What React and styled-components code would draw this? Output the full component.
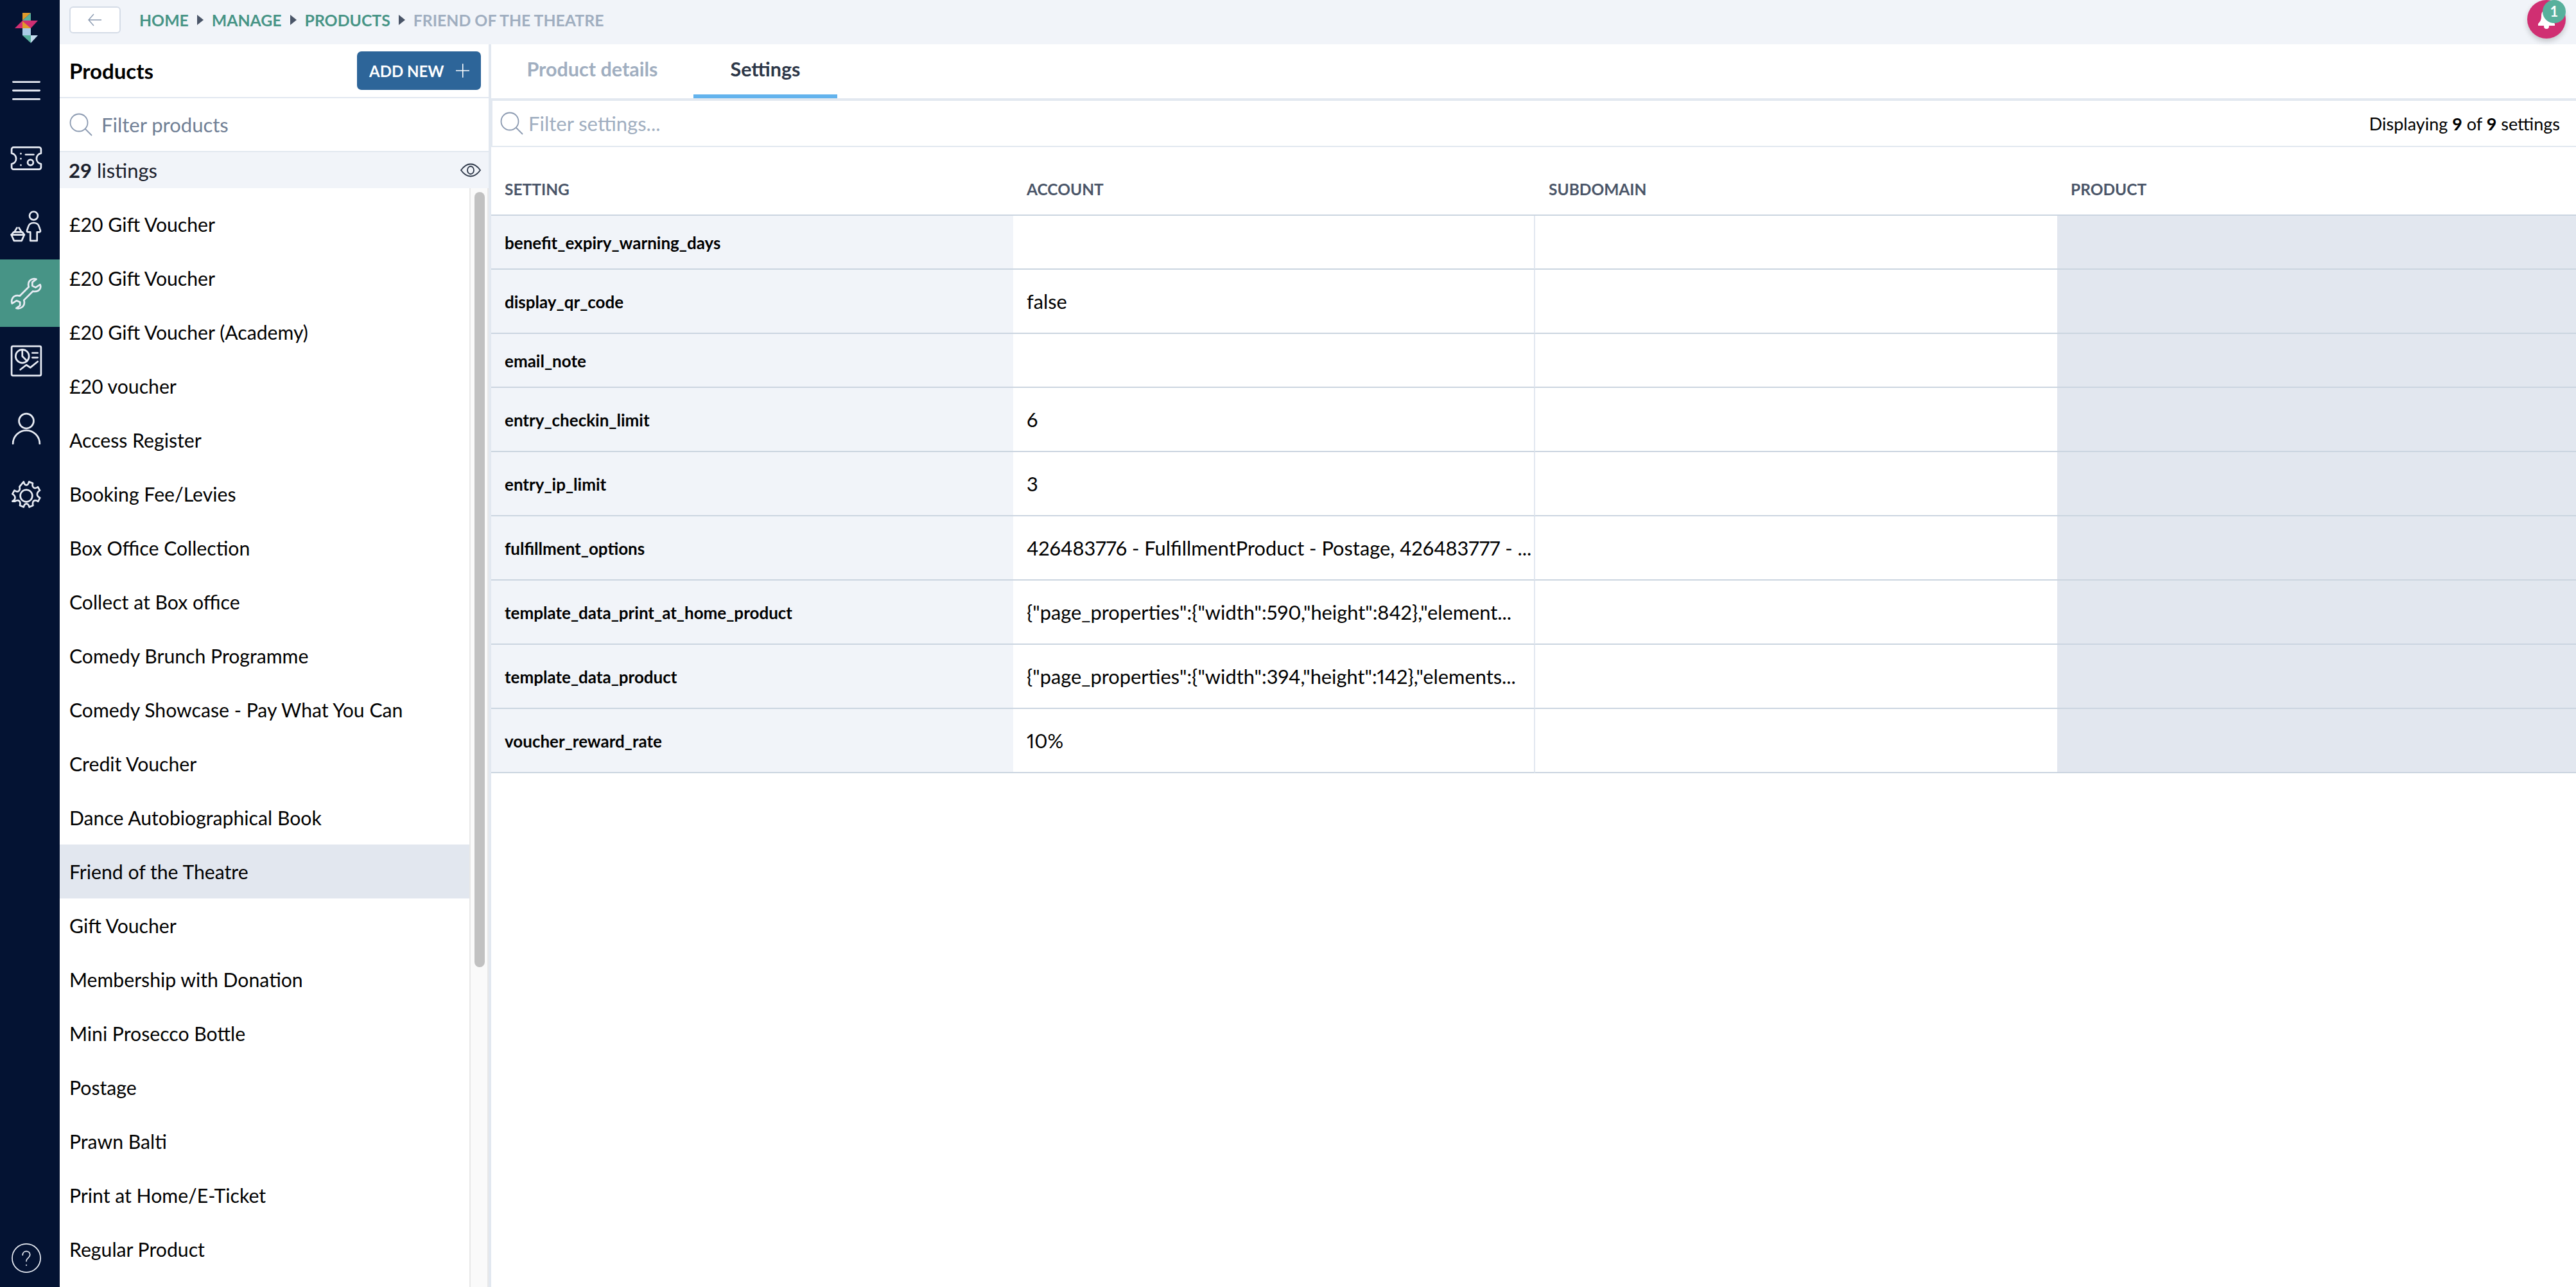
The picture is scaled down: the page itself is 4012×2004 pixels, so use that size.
import React from "react";
import styled, { createGlobalStyle } from "styled-components";

const products = [
  "£20 Gift Voucher",
  "£20 Gift Voucher",
  "£20 Gift Voucher (Academy)",
  "£20 voucher",
  "Access Register",
  "Booking Fee/Levies",
  "Box Office Collection",
  "Collect at Box office",
  "Comedy Brunch Programme",
  "Comedy Showcase - Pay What You Can",
  "Credit Voucher",
  "Dance Autobiographical Book",
  "Friend of the Theatre",
  "Gift Voucher",
  "Membership with Donation",
  "Mini Prosecco Bottle",
  "Postage",
  "Prawn Balti",
  "Print at Home/E-Ticket",
  "Regular Product",
];

const settings = [
  { name: "benefit_expiry_warning_days", value: "" },
  { name: "display_qr_code", value: "false" },
  { name: "email_note", value: "" },
  { name: "entry_checkin_limit", value: "6" },
  { name: "entry_ip_limit", value: "3" },
  { name: "fulfillment_options", value: "426483776 - FulfillmentProduct - Postage, 426483777 - ..." },
  { name: "template_data_print_at_home_product", value: '{"page_properties":{"width":590,"height":842},"element...' },
  { name: "template_data_product", value: '{"page_properties":{"width":394,"height":142},"elements...' },
  { name: "voucher_reward_rate", value: "10%" },
];

const GlobalStyle = createGlobalStyle`
  html, body {
    margin: 0;
    padding: 0;
    background: #fff;
  }
  body {
    font-family: "Lato", "Liberation Sans", sans-serif;
    color: #000;
  }
  * {
    box-sizing: border-box;
  }
`;

const Page = styled.div`
  display: flex;
  width: 4012px;
  height: 2004px;
  overflow: hidden;
`;

const Sidebar = styled.nav`
  display: flex;
  flex-direction: column;
  flex: 0 0 93px;
  background: #041333;
  color: #e8ecf4;
`;

const LogoBox = styled.div`
  display: flex;
  justify-content: center;
  height: 88px;
  padding: 20px 12px 0 0;
`;

const NavItem = styled.div`
  display: flex;
  align-items: center;
  justify-content: center;
  height: ${(p) => p.$height || 105}px;
  padding-right: 12px;
  background: ${(p) => (p.$active ? "#479486" : "transparent")};
`;

const HelpItem = styled(NavItem)`
  margin-top: auto;
  margin-bottom: 22px;
`;

const Main = styled.div`
  display: flex;
  flex-direction: column;
  flex: 1;
  min-width: 0;
`;

const TopBar = styled.header`
  display: flex;
  align-items: center;
  flex: 0 0 69px;
  padding: 0 16px 7px 15px;
  background: #f1f4f9;
`;

const BackButton = styled.button`
  display: flex;
  align-items: center;
  justify-content: center;
  width: 80px;
  height: 42px;
  margin-right: 29px;
  padding: 0;
  background: #fff;
  border: 2px solid #d5dce7;
  border-radius: 6px;
  color: #8a99b0;
`;

const Crumbs = styled.div`
  display: flex;
  align-items: center;
  gap: 13px;
  font-size: 24.8px;
  font-weight: 700;
`;

const Crumb = styled.span`
  color: ${(p) => (p.$current ? "#a0aec0" : "#479486")};
`;

const CrumbArrow = styled.span`
  width: 0;
  height: 0;
  border-top: 8px solid transparent;
  border-bottom: 8px solid transparent;
  border-left: 10px solid #4a5568;
`;

const Bell = styled.div`
  position: relative;
  display: flex;
  align-items: center;
  justify-content: center;
  align-self: flex-start;
  width: 60px;
  height: 60px;
  margin-left: auto;
  border-radius: 50%;
  background: #d02f72;
  box-shadow: 0 4px 8px rgba(0, 0, 0, 0.2);
`;

const BellBadge = styled.span`
  position: absolute;
  top: 0;
  right: 0;
  width: 36px;
  height: 36px;
  border-radius: 50%;
  background: #58b09c;
  color: #fff;
  font-size: 22px;
  font-weight: 700;
  line-height: 36px;
  text-align: center;
`;

const Content = styled.div`
  display: flex;
  flex: 1;
  min-height: 0;
`;

const ListPanel = styled.aside`
  display: flex;
  flex-direction: column;
  flex: 0 0 672px;
  border-right: 4px solid #e2e8f0;
`;

const PanelHead = styled.div`
  display: flex;
  align-items: center;
  justify-content: space-between;
  flex: 0 0 84px;
  padding: 0 12px 0 15px;
  border-bottom: 2px solid #e2e8f0;
`;

const PanelTitle = styled.h2`
  margin: 0;
  font-size: 33px;
  font-weight: 700;
`;

const AddButton = styled.button`
  display: flex;
  align-items: center;
  gap: 18px;
  width: 193px;
  height: 60px;
  padding: 0 18px 0 19px;
  background: #2d6599;
  border: 0;
  border-radius: 7px;
  color: #fff;
  font-family: inherit;
  font-size: 24px;
  font-weight: 700;
  white-space: nowrap;
`;

const FilterRow = styled.div`
  display: flex;
  align-items: center;
  gap: 14px;
  flex: 0 0 84px;
  padding: 0 15px;
  border-bottom: 2px solid #e2e8f0;
  color: #8a99b0;
`;

const FilterText = styled.span`
  color: #718096;
  font-size: 31px;
`;

const CountRow = styled.div`
  display: flex;
  align-items: center;
  justify-content: space-between;
  flex: 0 0 56px;
  padding: 0 12px 0 14px;
  background: #f1f4f9;
  font-size: 31px;
  color: #1a202c;
`;

const Strong = styled.b`
  font-weight: 700;
`;

const ListBody = styled.div`
  display: flex;
  flex: 1;
  min-height: 0;
`;

const List = styled.div`
  flex: 1;
  padding-top: 14px;
  overflow: hidden;
`;

const ListRow = styled.div`
  display: flex;
  align-items: center;
  height: 84px;
  padding: 0 15px;
  background: ${(p) => (p.$selected ? "#e2e7ef" : "transparent")};
  font-size: 30.2px;
  white-space: nowrap;
`;

const ScrollTrack = styled.div`
  flex: 0 0 28px;
  padding: 6px 4px 0 6px;
  background: #fafafa;
  border-left: 2px solid #e8e8e8;
  border-right: 2px solid #e8e8e8;
`;

const ScrollThumb = styled.div`
  width: 16px;
  height: 1207px;
  border-radius: 8px;
  background: #c1c1c1;
`;

const DetailPanel = styled.section`
  display: flex;
  flex-direction: column;
  flex: 1;
  min-width: 0;
`;

const Tabs = styled.div`
  display: flex;
  flex: 0 0 88px;
  border-bottom: 4px solid #e2e8f0;
`;

const Tab = styled.div`
  display: flex;
  align-items: center;
  justify-content: center;
  width: ${(p) => p.$width}px;
  height: 84px;
  padding-bottom: 2px;
  font-size: 30.5px;
  font-weight: 700;
  color: ${(p) => (p.$active ? "#2d3748" : "#a0aec0")};
  border-bottom: 6px solid ${(p) => (p.$active ? "#63b3ed" : "transparent")};
`;

const SettingsFilter = styled.div`
  display: flex;
  align-items: center;
  gap: 8px;
  flex: 0 0 72px;
  padding: 0 25px 0 12px;
  border-left: 2px solid #e2e8f0;
  border-bottom: 2px solid #e2e8f0;
  color: #8a99b0;
`;

const SettingsFilterText = styled.span`
  color: #a0aec0;
  font-size: 31px;
`;

const Displaying = styled.span`
  margin-left: auto;
  color: #000;
  font-size: 27px;
`;

const Table = styled.div`
  display: grid;
  grid-template-columns: 813px 813px 813px 808px;
`;

const HeadCell = styled.div`
  display: flex;
  align-items: center;
  height: 107px;
  padding: 26px 21px 0;
  border-bottom: 2px solid #cbd5e0;
  color: #4a5568;
  font-size: 24.5px;
  font-weight: 700;
`;

const Cell = styled.div`
  display: flex;
  align-items: center;
  height: ${(p) => (p.$tall ? 100 : 84)}px;
  padding: 0 21px;
  border-bottom: 2px solid #cbd5e0;
  font-size: 30.8px;
  font-feature-settings: "pnum";
  white-space: nowrap;
  overflow: hidden;
`;

const NameCell = styled(Cell)`
  padding-top: 2px;
  background: #f1f4f9;
  font-size: 26px;
  font-weight: 700;
`;

const ValueCell = styled(Cell)`
  border-right: ${(p) => (p.$divider ? "2px solid #e2e8f0" : "0")};
`;

const LockedCell = styled(Cell)`
  background: #e2e7ef;
`;

const Stroke = ({ size, sw = 1.3, children }) => (
  <svg width={size} height={size} viewBox="0 0 24 24" fill="none" stroke="currentColor" strokeWidth={sw} strokeLinecap="round" strokeLinejoin="round">
    {children}
  </svg>
);

const Logo = () => (
  <svg width="36" height="47" viewBox="0 0 36 47">
    <polygon points="12,0 25,0 12,12" fill="#e09a2c" />
    <polygon points="25,0 25,12 12,12" fill="#58b09c" />
    <polygon points="0,24 12,12 36,12 25,24" fill="#d02f72" />
    <polygon points="12,24 25,24 12,13" fill="#e09a2c" />
    <polygon points="12,24 25,24 25,35 12,35" fill="#a9cbe6" />
    <polygon points="12,35 25,35 25,47" fill="#58b09c" />
    <polygon points="25,35 36,35 25,47" fill="#c4ddf0" />
  </svg>
);

const SearchIcon = ({ size = 36 }) => (
  <Stroke size={size} sw={1.2}>
    <circle cx="10" cy="10" r="9" />
    <path d="M16.5 16.5 23 23" />
  </Stroke>
);

const Icons = {
  menu: (
    <Stroke size={44} sw={1.6}>
      <path d="M0.8 4.700h22.400M0.800 12h22.400M0.800 19.300h22.400" />
    </Stroke>
  ),
  ticket: (
    <Stroke size={50}>
      <path d="M2.500 3.500h19a1.500 1.500 0 0 1 1.500 1.500V8c-4.500 1-4.500 7 0 8v2.500a1.500 1.500 0 0 1-1.500 1.500h-19A1.500 1.500 0 0 1 1 18.500V16c4.500-1 4.500-7 0-8V5A1.500 1.500 0 0 1 2.500 3.500Z" />
      <circle cx="15.100" cy="14.900" r="2.100" />
      <path d="M11.500 9h6" />
      <path d="M7.900 8.200v.1M7.900 12v.1M7.900 16.800v.1" />
    </Stroke>
  ),
  customer: (
    <Stroke size={50}>
      <circle cx="17.500" cy="4.300" r="3.100" />
      <path d="M15 23v-6.500h-1.500c-.8 0-1.200-.5-1-1.200l1-3c.5-1.700 2.200-2.700 4-2.700s3.500 1 4 2.700l1 3c.2.7-.2 1.200-1 1.200h-1.500V23Z" />
      <path d="M.8 18.500 2.800 23h5.700l2-4.500-1.500-2H2.500Z" />
      <path d="M.8 18.500h9.700M3 16.500l2-3.200M8.500 16.500l-2-3.200" />
    </Stroke>
  ),
  wrench: (
    <Stroke size={50}>
      <path d="M22.300 5.300 18.900 7.500 16.500 6.300 16.500 3.500 19.500 1.300C16.500.3 13.500 2.200 13.500 5.300c0 .8.1 1.300.3 1.800L7.100 13.800C6.500 13.600 6 13.500 5.300 13.500 2.200 13.500.3 16.500 1.300 19.500L4.700 17.300 7.300 18.500 7.300 21 4.500 23C7.500 23.800 10.500 21.800 10.500 18.700c0-.7-.1-1.200-.3-1.700l6.700-6.700c.5.2 1 .2 1.600.2 3.100 0 5-2.700 3.800-5.200Z" />
    </Stroke>
  ),
  report: (
    <Stroke size={50}>
      <rect x="1" y="1" width="22" height="22" rx="1" />
      <circle cx="9" cy="8.500" r="5" />
      <path d="M9 3.500v5l3.500 3.500" />
      <path d="M16.500 6h4M16.500 9.500h4" />
      <path d="M7.500 18.500l4.500-3.500 3 2 5.500-4.500" />
    </Stroke>
  ),
  person: (
    <Stroke size={50}>
      <circle cx="12" cy="6.500" r="5.500" />
      <path d="M2 23.500c0-5.500 4.500-10 10-10s10 4.500 10 10" />
    </Stroke>
  ),
  gear: (
    <Stroke size={50}>
      <circle cx="12" cy="12" r="4.500" />
      <path d="M10 1.500c.5 2 1.300 2.500 2 2.500s1.500-.5 2-2.500l2.800 1.100c-.5 2 0 2.800.6 3.200.5.5 1.500.8 3.200-.4l1.500 2.600c-1.800 1-2 2-2 2.900 0 .8.3 1.700 2.100 2.600l-1.400 2.700c-1.800-1.100-2.800-.8-3.300-.3-.6.5-1 1.300-.5 3.300l-2.800 1.200c-.5-2-1.300-2.500-2.200-2.500-.8 0-1.500.5-2 2.500l-2.800-1.200c.5-2 .1-2.800-.5-3.300s-1.500-.8-3.300.3L1.600 16.100c1.800-.9 2-1.800 2-2.600 0-.9-.2-1.900-2-2.900l1.500-2.600c1.700 1.200 2.700.9 3.200.4.6-.4 1.100-1.200.6-3.200Z" />
    </Stroke>
  ),
  help: (
    <Stroke size={46} sw={0.9}>
      <circle cx="12" cy="12" r="11.500" />
      <path d="M9 9.500c0-1.800 1.300-3 3-3s3 1.200 3 2.800c0 2.500-3 2.500-3 5.200" />
      <path d="M12 17.600v.3" />
    </Stroke>
  ),
};

const navItems = ["ticket", "customer", "wrench", "report", "person", "gear"];

const App = () => {
  return (
    <>
      <GlobalStyle />
      <Page>
        <Sidebar>
          <LogoBox>
            <Logo />
          </LogoBox>
          <NavItem $height={106}>{Icons.menu}</NavItem>
          {navItems.map((name) => (
            <NavItem key={name} $active={name === "wrench"}>
              {Icons[name]}
            </NavItem>
          ))}
          <HelpItem $height={46}>{Icons.help}</HelpItem>
        </Sidebar>
        <Main>
          <TopBar>
            <BackButton>
              <svg width="22" height="20" viewBox="0 0 22 20" fill="none" stroke="currentColor" strokeWidth="1.4">
                <path d="M21 10H1M9 1l-8 9 8 9" />
              </svg>
            </BackButton>
            <Crumbs>
              <Crumb>HOME</Crumb>
              <CrumbArrow />
              <Crumb>MANAGE</Crumb>
              <CrumbArrow />
              <Crumb>PRODUCTS</Crumb>
              <CrumbArrow />
              <Crumb $current>FRIEND OF THE THEATRE</Crumb>
            </Crumbs>
            <Bell>
              <svg width="36" height="30" viewBox="0 0 36 30" fill="#fff">
                <path d="M18 0c-6 0-8 5-8 10 0 6-2 9-5 12v3h26v-3c-3-3-5-6-5-12 0-5-2-10-8-10Z" />
                <circle cx="18" cy="26" r="4" />
              </svg>
              <BellBadge>1</BellBadge>
            </Bell>
          </TopBar>
          <Content>
            <ListPanel>
              <PanelHead>
                <PanelTitle>Products</PanelTitle>
                <AddButton>
                  ADD NEW
                  <svg width="22" height="22" viewBox="0 0 22 22" stroke="#fff" strokeWidth="1.6">
                    <path d="M11 0v22M0 11h22" />
                  </svg>
                </AddButton>
              </PanelHead>
              <FilterRow>
                <SearchIcon />
                <FilterText>Filter products</FilterText>
              </FilterRow>
              <CountRow>
                <span>
                  <Strong>29</Strong> listings
                </span>
                <svg width="32" height="22" viewBox="0 0 32 22" fill="none" stroke="#2d3748" strokeWidth="1.8">
                  <path d="M1 11C6 4 11 1.500 16 1.500S26 4 31 11c-5 7-10 9.500-15 9.500S6 18 1 11Z" />
                  <ellipse cx="16" cy="11" rx="5" ry="6" />
                </svg>
              </CountRow>
              <ListBody>
                <List>
                  {products.map((name, i) => (
                    <ListRow key={i} $selected={name === "Friend of the Theatre"}>
                      {name}
                    </ListRow>
                  ))}
                </List>
                <ScrollTrack>
                  <ScrollThumb />
                </ScrollTrack>
              </ListBody>
            </ListPanel>
            <DetailPanel>
              <Tabs>
                <Tab $width={315}>Product details</Tab>
                <Tab $width={224} $active>
                  Settings
                </Tab>
              </Tabs>
              <SettingsFilter>
                <SearchIcon />
                <SettingsFilterText>Filter settings...</SettingsFilterText>
                <Displaying>
                  Displaying <Strong>9</Strong> of <Strong>9</Strong> settings
                </Displaying>
              </SettingsFilter>
              <Table>
                <HeadCell>SETTING</HeadCell>
                <HeadCell>ACCOUNT</HeadCell>
                <HeadCell>SUBDOMAIN</HeadCell>
                <HeadCell>PRODUCT</HeadCell>
                {settings.map((s) => {
                  const tall = s.value !== "";
                  return (
                    <React.Fragment key={s.name}>
                      <NameCell $tall={tall}>{s.name}</NameCell>
                      <ValueCell $tall={tall} $divider>
                        {s.value}
                      </ValueCell>
                      <ValueCell $tall={tall} />
                      <LockedCell $tall={tall} />
                    </React.Fragment>
                  );
                })}
              </Table>
            </DetailPanel>
          </Content>
        </Main>
      </Page>
    </>
  );
};

export default App;
